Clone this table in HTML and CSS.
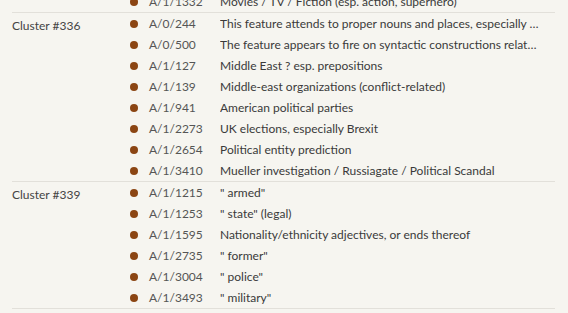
FILE: index.html
```html
<!DOCTYPE html>
<html>
<head>
<meta charset="utf-8">
<link rel="stylesheet" href="styles.css">
</head>
<body>
<div class="list">
  <div class="group">
    <div class="label"></div>
    <div class="rows">
      <div class="row"><span class="dot"></span><span class="id">A/1/1332</span><span class="desc">Movies / TV / Fiction (esp. action, superhero)</span></div>
    </div>
  </div>
  <div class="group">
    <div class="label">Cluster #336</div>
    <div class="rows">
      <div class="row"><span class="dot"></span><span class="id">A/0/244</span><span class="desc">This feature attends to proper nouns and places, especially in geographical and political contexts</span></div>
      <div class="row"><span class="dot"></span><span class="id">A/0/500</span><span class="desc">The feature appears to fire on syntactic constructions related to political discourse</span></div>
      <div class="row"><span class="dot"></span><span class="id">A/1/127</span><span class="desc">Middle East ? esp. prepositions</span></div>
      <div class="row"><span class="dot"></span><span class="id">A/1/139</span><span class="desc">Middle-east organizations (conflict-related)</span></div>
      <div class="row"><span class="dot"></span><span class="id">A/1/941</span><span class="desc">American political parties</span></div>
      <div class="row"><span class="dot"></span><span class="id">A/1/2273</span><span class="desc">UK elections, especially Brexit</span></div>
      <div class="row"><span class="dot"></span><span class="id">A/1/2654</span><span class="desc">Political entity prediction</span></div>
      <div class="row"><span class="dot"></span><span class="id">A/1/3410</span><span class="desc">Mueller investigation / Russiagate / Political Scandal</span></div>
    </div>
  </div>
  <div class="group">
    <div class="label">Cluster #339</div>
    <div class="rows">
      <div class="row"><span class="dot"></span><span class="id">A/1/1215</span><span class="desc">" armed"</span></div>
      <div class="row"><span class="dot"></span><span class="id">A/1/1253</span><span class="desc">" state" (legal)</span></div>
      <div class="row"><span class="dot"></span><span class="id">A/1/1595</span><span class="desc">Nationality/ethnicity adjectives, or ends thereof</span></div>
      <div class="row"><span class="dot"></span><span class="id">A/1/2735</span><span class="desc">" former"</span></div>
      <div class="row"><span class="dot"></span><span class="id">A/1/3004</span><span class="desc">" police"</span></div>
      <div class="row"><span class="dot"></span><span class="id">A/1/3493</span><span class="desc">" military"</span></div>
    </div>
  </div>
</div>
</body>
</html>
```

FILE: styles.css
```css
html, body {
  margin: 0;
  padding: 0;
  background: #f6f5f0;
}
body {
  font-family: Lato, "Noto Sans", sans-serif;
  font-size: 12px;
  color: #3a3a3a;
  overflow: hidden;
}
.list {
  margin: -9px 13px 0 12px;
}
.group {
  display: flex;
  border-bottom: 1px solid #e2e0da;
}
.label {
  width: 118px;
  flex: none;
  line-height: 21px;
  padding-top: 2px;
  color: #444;
}
.rows {
  flex: 1;
  min-width: 0;
}
.row {
  display: flex;
  align-items: center;
  height: 21px;
}
.dot {
  width: 8px;
  height: 8px;
  border-radius: 50%;
  background: #8b4513;
  flex: none;
  margin-right: 11px;
}
.id {
  width: 71px;
  flex: none;
  color: #555;
}
.desc {
  flex: 1;
  min-width: 0;
  white-space: nowrap;
  overflow: hidden;
  text-overflow: ellipsis;
  margin-right: 14px;
  color: #3a3a3a;
}
```
